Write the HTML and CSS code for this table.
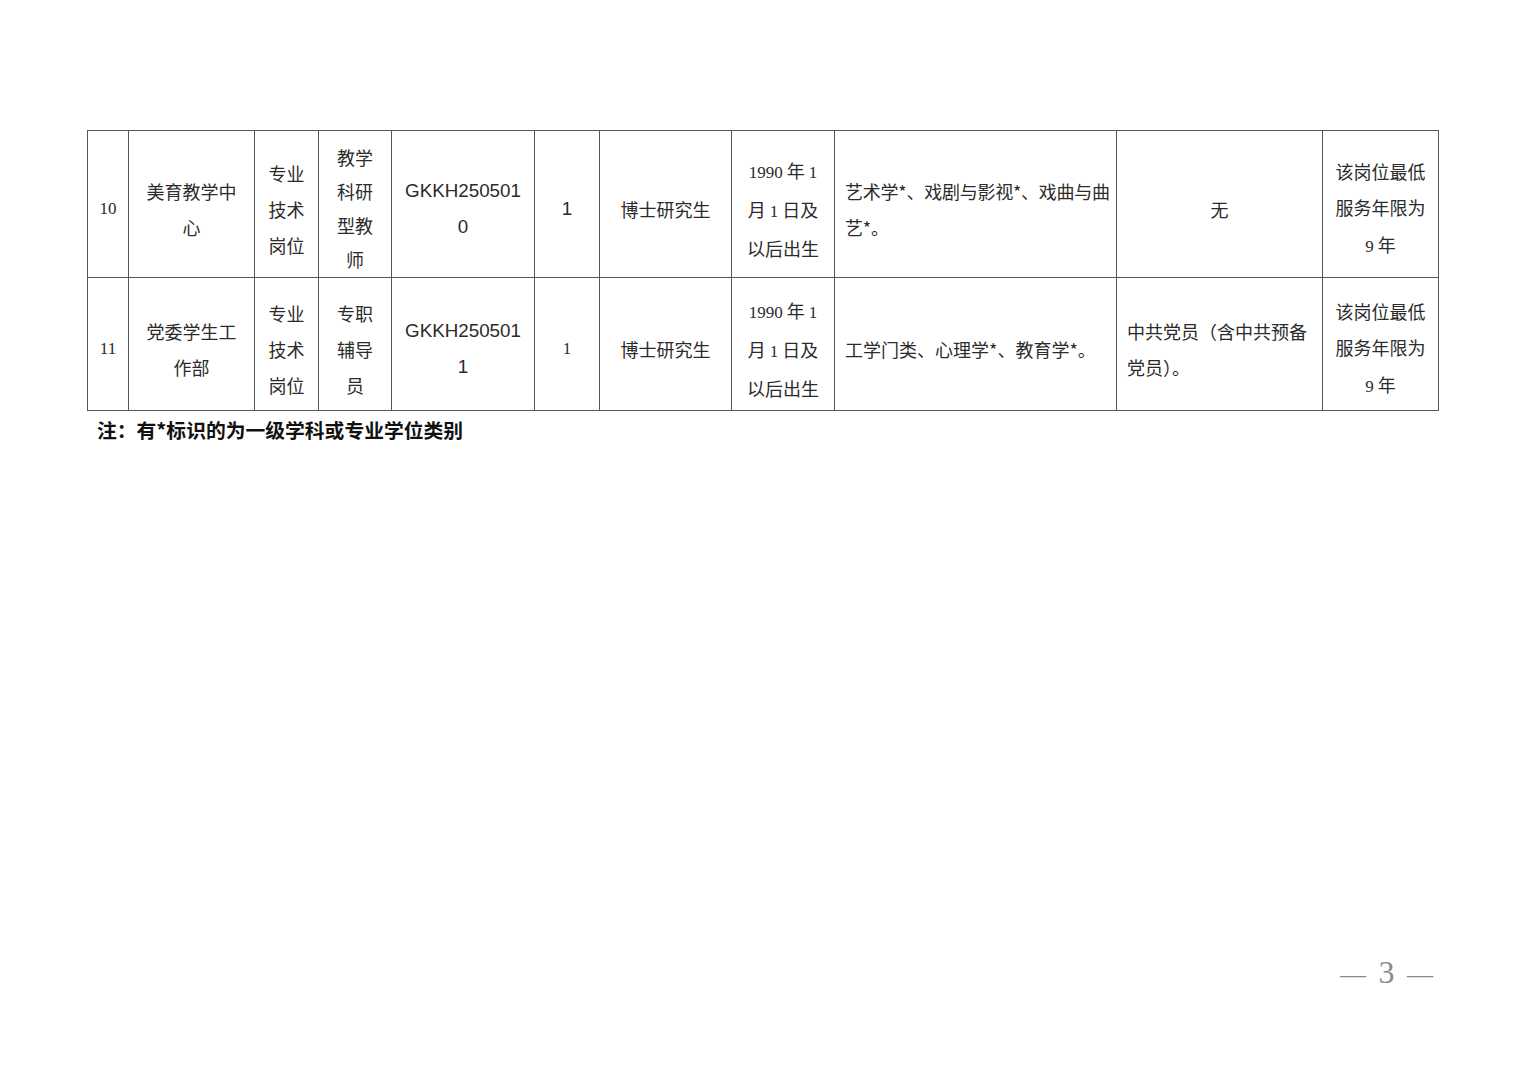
FILE: index.html
```html
<!DOCTYPE html>
<html lang="zh-CN">
<head>
<meta charset="utf-8">
<title>岗位表</title>
<link rel="stylesheet" href="styles.css">
</head>
<body>
<div class="page">
  <table class="jobs">
    <colgroup>
      <col class="c1"><col class="c2"><col class="c3"><col class="c4"><col class="c5"><col class="c6"><col class="c7"><col class="c8"><col class="c9"><col class="c10"><col class="c11">
    </colgroup>
    <tbody>
      <tr class="r1">
        <td class="serif">10</td>
        <td>美育教学中<br>心</td>
        <td>专业<br>技术<br>岗位</td>
        <td class="tight">教学<br>科研<br>型教<br>师</td>
        <td class="latin">GKKH250501<br>0</td>
        <td class="latin">1</td>
        <td>博士研究生</td>
        <td><span class="serif">1990</span> 年 <span class="serif">1</span><br>月 <span class="serif">1</span> 日及<br>以后出生</td>
        <td class="left narrow">艺术学*、戏剧与影视*、戏曲与曲<br>艺*。</td>
        <td>无</td>
        <td>该岗位最低<br>服务年限为<br><span class="serif">9</span> 年</td>
      </tr>
      <tr class="r2">
        <td class="serif">11</td>
        <td>党委学生工<br>作部</td>
        <td>专业<br>技术<br>岗位</td>
        <td>专职<br>辅导<br>员</td>
        <td class="latin">GKKH250501<br>1</td>
        <td class="serif">1</td>
        <td>博士研究生</td>
        <td><span class="serif">1990</span> 年 <span class="serif">1</span><br>月 <span class="serif">1</span> 日及<br>以后出生</td>
        <td class="left">工学门类、心理学*、教育学*。</td>
        <td class="left">中共党员（含中共预备<br>党员）。</td>
        <td>该岗位最低<br>服务年限为<br><span class="serif">9</span> 年</td>
      </tr>
    </tbody>
  </table>
  <p class="note">注：有*标识的为一级学科或专业学位类别</p>
  <div class="pageno">— <span class="num">3</span> —</div>
</div>
</body>
</html>
```

FILE: styles.css
```css
html, body {
  margin: 0;
  padding: 0;
  background: #ffffff;
}

.page {
  box-sizing: border-box;
  height: 1080px;
  padding: 130px 0 0 87px;
  display: flex;
  flex-direction: column;
  font-family: "Liberation Sans", "Noto Sans CJK SC", sans-serif;
  color: #2b2b2b;
}

.jobs {
  border-collapse: collapse;
  table-layout: fixed;
  width: 1351px;
  font-size: 18px;
  line-height: 36.3px;
}

.c1 { width: 41px; }
.c2 { width: 126px; }
.c3 { width: 64px; }
.c4 { width: 73px; }
.c5 { width: 143px; }
.c6 { width: 65px; }
.c7 { width: 132px; }
.c8 { width: 103px; }
.c9 { width: 282px; }
.c10 { width: 206px; }
.c11 { width: 116px; }

.jobs td {
  border: 1px solid #555555;
  padding: 10px 4px 0;
  text-align: center;
  vertical-align: middle;
  font-family: "Noto Sans CJK SC", sans-serif;
  white-space: nowrap;
}

.r1 { height: 147px; }
.r2 { height: 133px; }

.jobs td.tight {
  line-height: 33.8px;
}

.jobs td.left {
  text-align: left;
  padding-left: 10px;
}

.jobs td.narrow {
  letter-spacing: -0.25px;
}

.jobs td.latin {
  font-family: "Liberation Sans", Arial, sans-serif;
  font-size: 18.8px;
}

.serif,
.jobs td.serif {
  font-family: "Liberation Serif", "Times New Roman", serif;
  font-size: 17px;
}

.note {
  margin: 6px 0 0 10px;
  font-size: 19.8px;
  font-weight: bold;
  line-height: 26px;
  color: #111111;
  font-family: "Noto Sans CJK SC", sans-serif;
}

.pageno {
  margin-top: auto;
  margin-bottom: 90px;
  margin-right: 95px;
  align-self: flex-end;
  font-family: "Liberation Serif", "Noto Sans CJK SC", serif;
  font-size: 26px;
  color: #8a8a8a;
  line-height: 30px;
}

.pageno .num {
  font-size: 32px;
  margin: 0 6px;
}
```
